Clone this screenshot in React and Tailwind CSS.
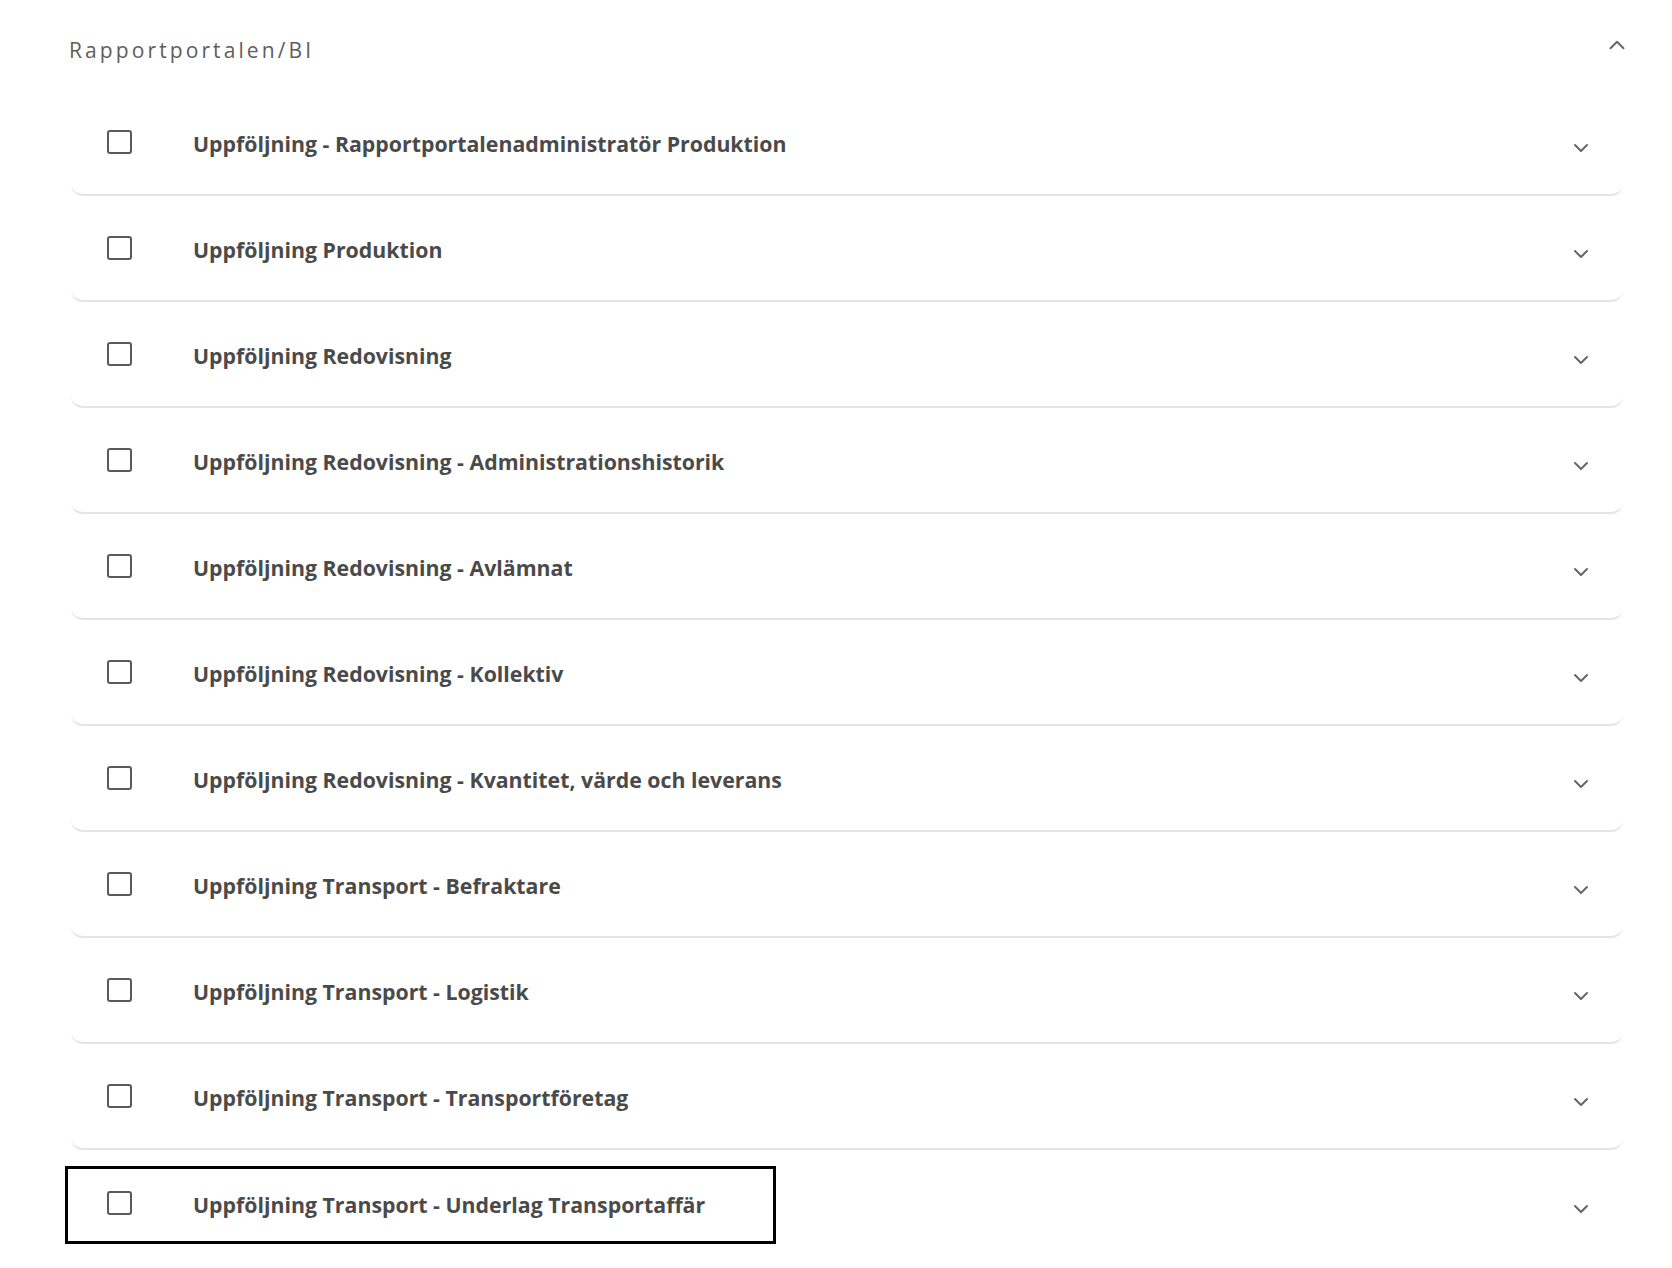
import { ChevronDown, ChevronUp } from 'lucide-react';

const items = [
  'Uppföljning - Rapportportalenadministratör Produktion',
  'Uppföljning Produktion',
  'Uppföljning Redovisning',
  'Uppföljning Redovisning - Administrationshistorik',
  'Uppföljning Redovisning - Avlämnat',
  'Uppföljning Redovisning - Kollektiv',
  'Uppföljning Redovisning - Kvantitet, värde och leverans',
  'Uppföljning Transport - Befraktare',
  'Uppföljning Transport - Logistik',
  'Uppföljning Transport - Transportföretag',
  'Uppföljning Transport - Underlag Transportaffär',
];

function Row({ label, focused, last }) {
  return (
    <div
      className={`flex items-center justify-between h-[106px] pt-[4px] rounded-b-xl bg-white ${
        last ? '' : 'border-b-2 border-[#e4e4e4]'
      }`}
    >
      <div
        className={`ml-[-3px] h-[72px] pl-[39px] pr-[68px] flex items-center ${
          focused ? 'outline-[3px] outline-black' : ''
        }`}
      >
        <span className="w-[25px] h-[24px] -mt-[4px] rounded-[3px] border-2 border-[#5a5a5a] bg-white shrink-0" />
        <span className="ml-[61px] text-[21.3px] font-bold text-[#4a4a4a] leading-none">{label}</span>
      </div>
      <ChevronDown className="mr-[30px] mt-[8px] w-[24px] h-[24px] text-[#666]" strokeWidth={2} />
    </div>
  );
}

export default function App() {
  return (
    <div className="min-h-screen bg-white font-['Open_Sans',sans-serif] pl-[71px] pr-[49px]">
      <div className="h-[90px] flex items-start justify-between">
        <span className="ml-[-2px] mt-[40px] text-[21px] tracking-[3.1px] text-[#5e5e5e] leading-none">
          Rapportportalen/BI
        </span>
        <ChevronUp className="mr-[-7px] mt-[32px] w-[26px] h-[26px] text-[#666]" strokeWidth={1.8} />
      </div>
      <div className="flex flex-col">
        {items.map((t, i) => (
          <Row key={t} label={t} focused={i === items.length - 1} last={i === items.length - 1} />
        ))}
      </div>
    </div>
  );
}
